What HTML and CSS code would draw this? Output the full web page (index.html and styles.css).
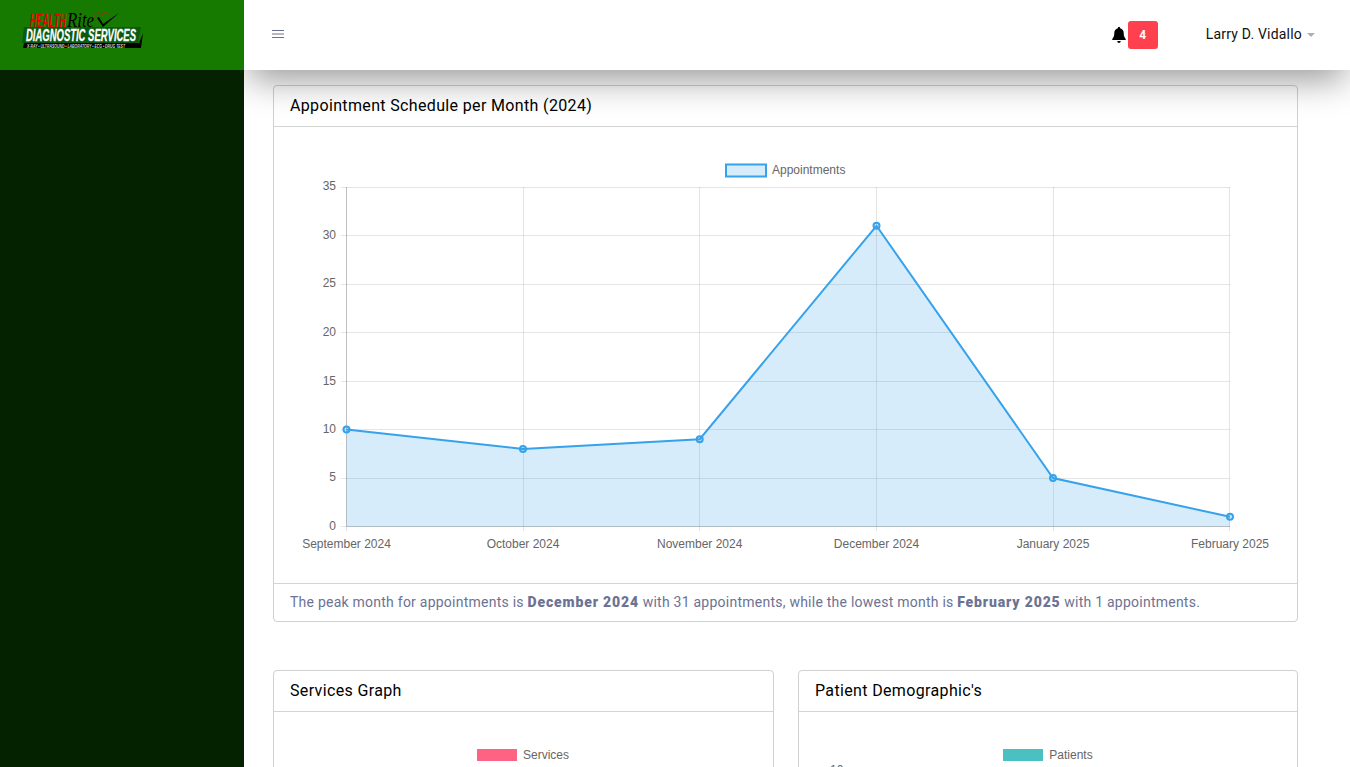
FILE: index.html
```html
<!DOCTYPE html>
<html lang="en">
<head>
    <meta charset="UTF-8">
    <meta name="viewport" content="width=device-width, initial-scale=1.0">
    <title>Dashboard</title>
    <link rel="stylesheet" href="styles.css">
</head>
<body>
    <div class="wrapper">
        <aside class="sidebar">
            <div class="brand">
                <svg class="logo" viewBox="0 0 125 40" width="125" height="40">
                    <text class="logo-health" x="8" y="18" textLength="36" lengthAdjust="spacingAndGlyphs">HEALTH</text>
                    <text class="logo-rite" x="45" y="18" textLength="27" lengthAdjust="spacingAndGlyphs">Rite</text>
                    <path d="M80 15c-5-3-8-6-7-9 1-3 5-3 7 0 2-3 6-3 6 0" fill="none" stroke="#b5201c" stroke-width=".8"/>
                    <path d="M75 9l2-1 4 7L97 4 81 18z" fill="#000"/>
                    <polygon points="121,24 119,39 1,39 2,34 117,34" fill="#000"/>
                    <polygon points="2,18 119,18 116,34 0,34" fill="#0a5a12"/>
                    <text class="logo-main" x="4" y="32" textLength="110" lengthAdjust="spacingAndGlyphs">DIAGNOSTIC SERVICES</text>
                    <text class="logo-sub" x="5" y="38.500" textLength="98" lengthAdjust="spacingAndGlyphs">X-RAY • ULTRASOUND • LABORATORY • ECG • DRUG TEST</text>
                </svg>
            </div>
        </aside>
        <div class="main">
            <header class="topbar">
                <svg class="menu-icon" viewBox="0 0 12 10" width="12" height="10">
                    <path d="M0 1.5h12M0 5h12M0 8.500h12" stroke="#6c7293" stroke-width="1.2"/>
                </svg>
                <div class="topbar-right">
                    <svg class="bell" viewBox="0 0 14 16" width="14" height="16">
                        <path d="M7 0c-.7 0-1.2.5-1.2 1.2C3.6 1.800 2.300 3.600 2.300 6c0 3.600-1 4.600-2.100 5.900-.3.500 0 1.100.6 1.100h12.400c.6 0 .9-.6.6-1.100C12.700 10.600 11.700 9.600 11.700 6c0-2.400-1.300-4.200-3.500-4.800C8.200.5 7.700 0 7 0zM5.300 14c0 1 .8 2 1.700 2s1.700-1 1.700-2z" fill="#000"/>
                    </svg>
                    <span class="badge">4</span>
                    <span class="user">Larry D. Vidallo</span>
                    <span class="caret"></span>
                </div>
            </header>
            <div class="content">
                <section class="card">
                    <h4 class="card-title">Appointment Schedule per Month (2024)</h4>
                    <div class="card-body">
                        <svg class="chart" viewBox="274 127 1023 456" width="1023" height="456">
                            <g class="grid">
                                <path d="M341 187.500H1230M341 235.500H1230M341 284.500H1230M341 332.500H1230M341 381.500H1230M341 429.500H1230M341 478.500H1230"/>
                                <path d="M523.500 187V531M699.500 187V531M876.500 187V531M1053.500 187V531M1229.500 187V531"/>
                                <path d="M341 526.500h5"/>
                                <path d="M346.500 526v5"/>
                            </g>
                            <path class="axis" d="M346.500 187V526.500H1230"/>
                            <path class="area" d="M346.500 429.500L523 449L699.700 439.200L876.500 225.800L1053 478L1230 516.800V526.500H346.500Z"/>
                            <path class="line" d="M346.500 429.500L523 449L699.700 439.200L876.500 225.800L1053 478L1230 516.800"/>
                            <g class="points">
                                <circle cx="346.500" cy="429.500" r="3"/>
                                <circle cx="523" cy="449" r="3"/>
                                <circle cx="699.700" cy="439.200" r="3"/>
                                <circle cx="876.500" cy="225.800" r="3"/>
                                <circle cx="1053" cy="478" r="3"/>
                                <circle cx="1230" cy="516.800" r="3"/>
                            </g>
                            <rect class="legend-box" x="726" y="164.500" width="40" height="12"/>
                            <text class="tick" x="772" y="174">Appointments</text>
                            <g class="y-ticks">
                                <text x="336" y="190">35</text>
                                <text x="336" y="239">30</text>
                                <text x="336" y="287">25</text>
                                <text x="336" y="336">20</text>
                                <text x="336" y="385">15</text>
                                <text x="336" y="433">10</text>
                                <text x="336" y="481">5</text>
                                <text x="336" y="530">0</text>
                            </g>
                            <g class="x-ticks">
                                <text x="346.500" y="548">September 2024</text>
                                <text x="523" y="548">October 2024</text>
                                <text x="699.700" y="548">November 2024</text>
                                <text x="876.500" y="548">December 2024</text>
                                <text x="1053" y="548">January 2025</text>
                                <text x="1230" y="548">February 2025</text>
                            </g>
                        </svg>
                    </div>
                    <div class="card-footer">
                        The peak month for appointments is <strong>December 2024</strong> with 31 appointments, while the lowest month is <strong>February 2025</strong> with 1 appointments.
                    </div>
                </section>
                <div class="row">
                    <section class="card">
                        <h4 class="card-title">Services Graph</h4>
                        <div class="legend legend-services">
                            <span class="legend-swatch swatch-pink"></span>
                            <span>Services</span>
                        </div>
                    </section>
                    <section class="card">
                        <h4 class="card-title">Patient Demographic's</h4>
                        <div class="legend">
                            <span class="legend-swatch swatch-teal"></span>
                            <span>Patients</span>
                        </div>
                        <span class="cut-tick">10</span>
                    </section>
                </div>
            </div>
        </div>
    </div>
</body>
</html>
```

FILE: styles.css
```css
* {
    box-sizing: border-box;
}
body {
    margin: 0;
    font-family: Roboto, "Liberation Sans", sans-serif;
    background: #fff;
    overflow: hidden;
}
.wrapper {
    display: flex;
    height: 100vh;
    overflow: hidden;
}
.sidebar {
    width: 244px;
    flex-shrink: 0;
    background: #052200;
    position: relative;
    z-index: 2;
}
.brand {
    height: 70px;
    background: #167a00;
    padding: 9px 0 0 22px;
}
.logo {
    display: block;
    overflow: visible;
}
.logo-health {
    font: italic bold 18px "Liberation Sans", sans-serif;
    fill: #f00000;
}
.logo-rite {
    font: italic 22px "Liberation Serif", serif;
    fill: #000;
}
.logo-main {
    font: italic bold 17px "Liberation Sans", sans-serif;
    fill: #fff;
    stroke: #fff;
    stroke-width: 0.3;
}
.logo-sub {
    font: italic bold 4.5px "Liberation Sans", sans-serif;
    fill: #ddd;
}
.main {
    flex: 1;
    min-width: 0;
}
.topbar {
    height: 70px;
    background: #fff;
    display: flex;
    align-items: center;
    justify-content: space-between;
    padding: 0 35px 2px 28px;
    position: relative;
    z-index: 1;
    box-shadow: 0 15px 35px -5px rgba(0, 0, 0, 0.4);
}
.topbar-right {
    display: flex;
    align-items: center;
}
.bell {
    margin-right: 2px;
    margin-top: 2px;
}
.badge {
    width: 30px;
    height: 28px;
    margin-top: 2px;
    border-radius: 3px;
    background: #ff404f;
    color: #fff;
    font-size: 12px;
    font-weight: 700;
    display: flex;
    align-items: center;
    justify-content: center;
}
.user {
    margin-left: 48px;
    font-size: 14px;
    letter-spacing: 0.2px;
    color: #111;
}
.caret {
    margin-left: 5px;
    margin-top: 2px;
    border-top: 4px solid #a9adbd;
    border-left: 4px solid transparent;
    border-right: 4px solid transparent;
}
.content {
    padding: 15px 52px 0 29px;
}
.card {
    border: 1px solid #d0d0d0;
    border-radius: 4px;
    background: #fff;
    position: relative;
}
.card-title {
    margin: 0;
    height: 41px;
    line-height: 40px;
    padding: 0 16px;
    font-size: 16px;
    font-weight: 400;
    letter-spacing: 0.35px;
    color: #000;
    border-bottom: 1px solid #d4d4d4;
}
.chart {
    display: block;
}
.card-footer {
    height: 38px;
    line-height: 36px;
    padding: 0 16px;
    font-size: 14px;
    letter-spacing: 0.24px;
    color: #6c7293;
    border-top: 1px solid #d4d4d4;
}
.card-footer strong {
    font-weight: 900;
    letter-spacing: 0.85px;
}
.grid path {
    fill: none;
    stroke: rgba(0, 0, 0, 0.1);
}
.axis {
    fill: none;
    stroke: rgba(0, 0, 0, 0.25);
}
.area {
    fill: rgba(54, 162, 235, 0.2);
}
.line {
    fill: none;
    stroke: #36a2eb;
    stroke-width: 2;
}
.points circle {
    fill: rgba(54, 162, 235, 0.2);
    stroke: #36a2eb;
    stroke-width: 2;
}
.legend-box {
    fill: rgba(54, 162, 235, 0.2);
    stroke: #36a2eb;
    stroke-width: 2;
}
.tick, .y-ticks text, .x-ticks text {
    font: 12px "Liberation Sans", sans-serif;
    fill: #666;
}
.y-ticks text {
    text-anchor: end;
}
.x-ticks text {
    text-anchor: middle;
}
.row {
    display: grid;
    grid-template-columns: 501px 500px;
    gap: 24px;
    margin-top: 48px;
}
.row .card {
    height: 300px;
}
.legend {
    display: flex;
    align-items: center;
    justify-content: center;
    gap: 6px;
    margin-top: 36px;
    font: 12px "Liberation Sans", sans-serif;
    color: #666;
}
.legend-services {
    padding-right: 1px;
}
.legend-swatch {
    width: 40px;
    height: 12px;
}
.swatch-pink {
    background: #ff6384;
}
.swatch-teal {
    background: #4bc0c0;
}
.cut-tick {
    position: absolute;
    left: 31px;
    top: 92px;
    font: 12px "Liberation Sans", sans-serif;
    color: #666;
}
```
